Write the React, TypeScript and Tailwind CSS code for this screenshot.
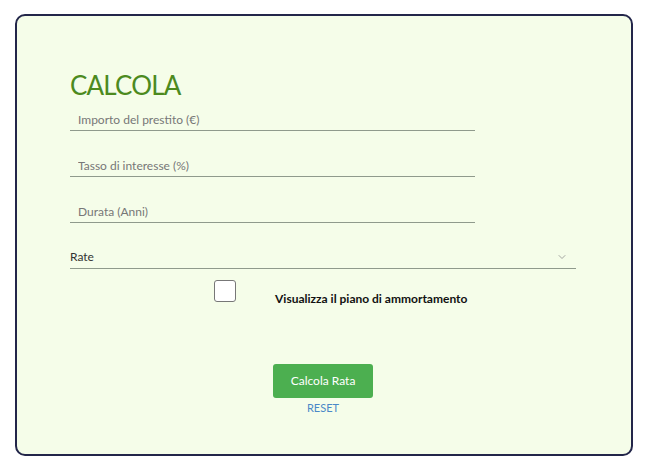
import { ChevronDown } from "lucide-react";

const fields = ["Importo del prestito (€)", "Tasso di interesse (%)", "Durata (Anni)"];

export default function App() {
    return (
        <div className="min-h-[473px] bg-white pt-[14px] pl-[15px] font-['Lato',sans-serif]">
            <div className="w-[618px] h-[442px] rounded-[10px] border-2 border-[#23264a] bg-[#f5fde9] pl-[53px] pt-[54px]">
                <h1 className="text-[26px] leading-[30px] tracking-[-0.8px] text-[#4c8a1e]">CALCOLA</h1>

                <div className="flex flex-col gap-[15px]">
                    {fields.map((label) => (
                        <input
                            key={label}
                            placeholder={label}
                            className="w-[405px] h-[31px] border-b border-[#8f9a8c] bg-transparent pl-[8px] pt-[8px] text-[12px] text-[#333] placeholder:text-[#777] outline-none"
                        />
                    ))}

                    <div className="w-[506px] h-[31px] border-b border-[#8f9a8c] flex items-center justify-between pt-[8px] pr-[8px]">
                        <span className="text-[12px] text-[#333]">Rate</span>
                        <ChevronDown size={12} color="#888" strokeWidth={1.5} />
                    </div>
                </div>

                <div className="mt-[11px] flex items-start pl-[144px]">
                    <div className="w-[22px] h-[22px] rounded-[3px] border border-[#777] bg-white" />
                    <span className="ml-[39px] mt-[10px] text-[12px] font-bold text-[#111]">Visualizza il piano di ammortamento</span>
                </div>

                <div className="mt-[56px] flex flex-col items-center w-[506px]">
                    <button className="w-[100px] h-[34px] rounded-[3px] bg-[#4caf50] text-[12px] text-white">Calcola Rata</button>
                    <button className="mt-[2px] text-[11px] text-[#4a89c8]">RESET</button>
                </div>
            </div>
        </div>
    );
}
